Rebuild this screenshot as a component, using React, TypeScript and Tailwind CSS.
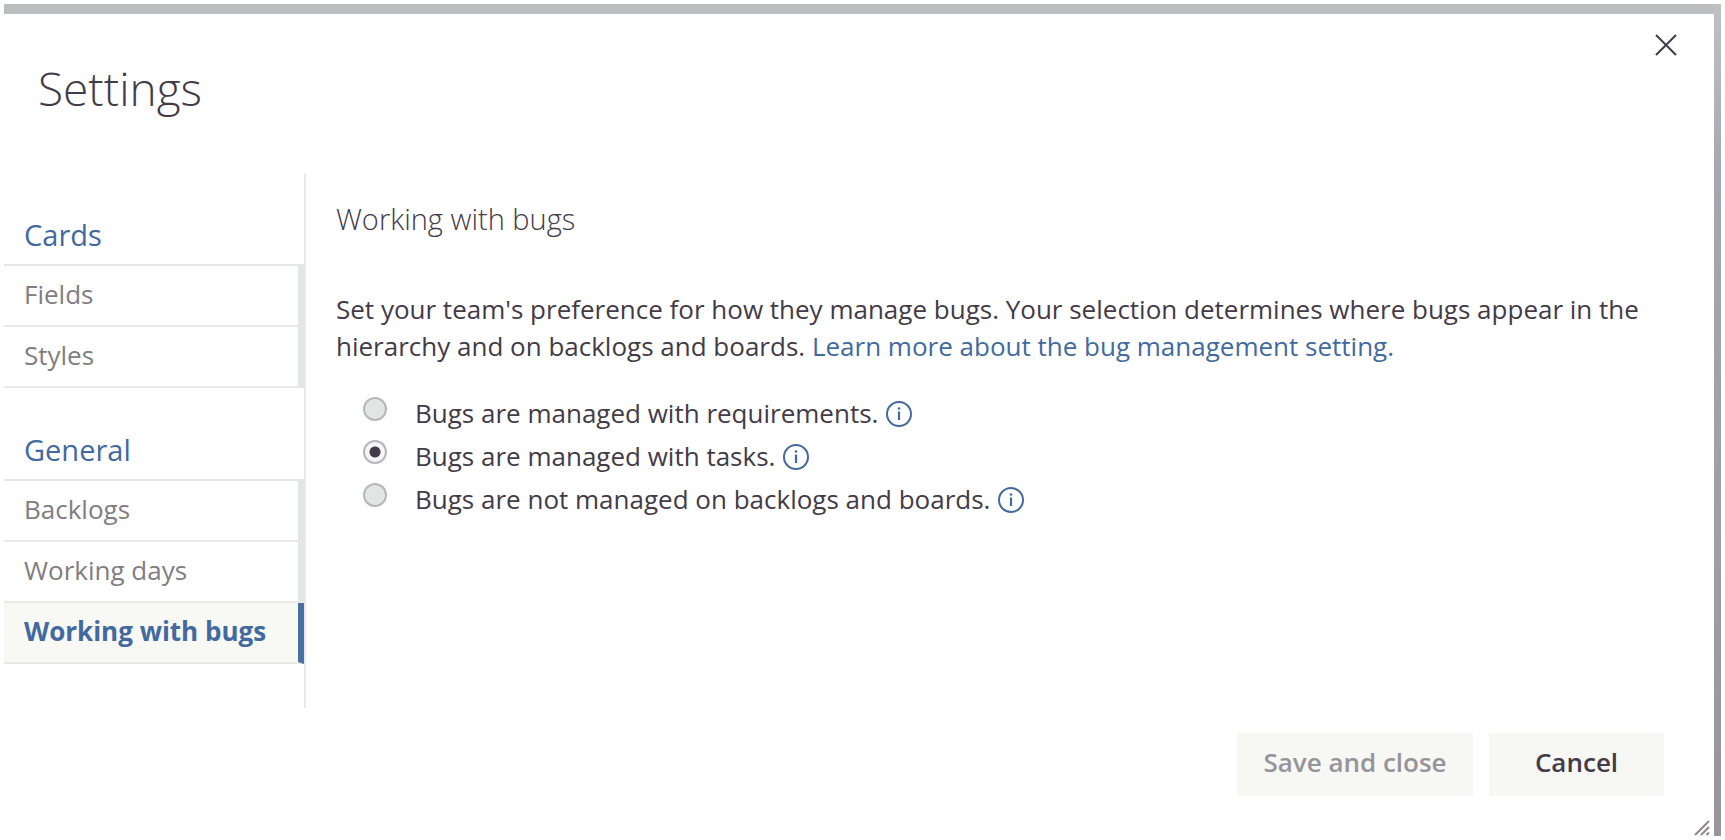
import { useState } from "react";

const sections = [
  { title: "Cards", items: ["Fields", "Styles"] },
  { title: "General", items: ["Backlogs", "Working days", "Working with bugs"] },
];

const options = [
  { id: "requirements", label: "Bugs are managed with requirements." },
  { id: "tasks", label: "Bugs are managed with tasks." },
  { id: "none", label: "Bugs are not managed on backlogs and boards." },
];

function InfoIcon() {
  return (
    <svg viewBox="0 0 26 26" className="h-[26px] w-[26px]" fill="none" aria-hidden="true">
      <circle cx="13" cy="13" r="12" stroke="#426a9f" strokeWidth="2" />
      <path d="M13 10.5V19" stroke="#426a9f" strokeWidth="2.2" />
      <circle cx="13" cy="7.5" r="1.3" fill="#426a9f" />
    </svg>
  );
}

function Sidebar({ active, onSelect }: { active: string; onSelect: (name: string) => void }) {
  return (
    <nav aria-label="Settings sections" className="w-[302px] shrink-0 border-r-2 border-[#e9e9e9] pb-11 pt-8">
      {sections.map((section) => (
        <section key={section.title} className="mb-8 last:mb-0">
          <h2 className="flex h-[59px] items-center pl-5 text-[29px] leading-9 text-[#426a9f]">{section.title}</h2>
          <ul className="border-t-2 border-[#e6e8e8]">
            {section.items.map((item) => {
              const selected = item === active;
              return (
                <li key={item}>
                  <button
                    type="button"
                    aria-current={selected ? "page" : undefined}
                    onClick={() => onSelect(item)}
                    className={
                      selected
                        ? "flex h-[61px] w-full items-center border-b-2 border-r-6 border-b-[#e6e8e8] border-r-[#4a6fa2] bg-[#f8f8f5] pb-1 pl-5 text-left text-[26px] font-bold leading-8 text-[#426a9f]"
                        : "flex h-[61px] w-full items-center border-b-2 border-r-6 border-b-[#e9e9e7] border-r-[#e4e6e6] pb-1 pl-5 text-left text-[26px] leading-8 text-[#817d82]"
                    }
                  >
                    {item}
                  </button>
                </li>
              );
            })}
          </ul>
        </section>
      ))}
    </nav>
  );
}

export default function App() {
  const [active, setActive] = useState("Working with bugs");
  const [choice, setChoice] = useState("tasks");

  return (
    <div className="flex min-h-screen bg-white p-1 font-['Open_Sans','Noto_Sans',sans-serif] text-[#433b48]">
      <div className="flex grow bg-linear-to-b from-[#bfc1c3] via-[#a5a8b0] via-20% to-[#98959a] pr-[7px]">
        <div className="flex grow flex-col border-t-10 border-[#bbbdbf] bg-white">
          <header className="flex items-start justify-between pl-[34px] pr-9 pt-[19px]">
            <h1 className="pt-5 text-[46px] font-light leading-[70px]">Settings</h1>
            <button type="button" aria-label="Close" className="flex h-6 w-6 items-center justify-center">
              <svg viewBox="0 0 24 24" className="h-6 w-6" fill="none" stroke="#433b48" strokeWidth="2" aria-hidden="true">
                <path d="M2 2L22 22M22 2L2 22" />
              </svg>
            </button>
          </header>

          <div className="mt-[50px] flex">
            <Sidebar active={active} onSelect={setActive} />
            <main className="grow pl-[30px] pr-14 pt-7">
              <h2 className="text-[29px] font-light leading-9">Working with bugs</h2>
              <p className="mt-[54px] text-[26px] leading-[37px]">
                Set your team's preference for how they manage bugs. Your selection determines where bugs appear in the hierarchy
                and on backlogs and boards.{" "}
                <a href="#bug-management" className="text-[#426a9f]">
                  Learn more about the bug management setting.
                </a>
              </p>
              <div role="radiogroup" aria-label="Bug management" className="mt-8 pl-[27px]">
                {options.map((option) => (
                  <div key={option.id} className="flex h-[43px] items-start gap-2">
                    <input
                      type="radio"
                      name="bugs"
                      id={option.id}
                      checked={choice === option.id}
                      onChange={() => setChoice(option.id)}
                      className="mr-5 h-6 w-6 shrink-0 appearance-none rounded-full border-2 border-[#b4b7bb] bg-[#e3e5e5] checked:bg-[radial-gradient(circle,#433b48_0_5px,#f6f6f6_6px)]"
                    />
                    <label htmlFor={option.id} className="text-[26px] leading-8">
                      {option.label}
                    </label>
                    <button type="button" aria-label={"About: " + option.label} className="mt-1">
                      <InfoIcon />
                    </button>
                  </div>
                ))}
              </div>
            </main>
          </div>

          <footer className="mt-auto flex items-end">
            <div className="mb-10 flex grow justify-end gap-4">
              <button type="button" disabled className="h-[63px] w-[236px] bg-[#f7f7f4] pb-1 text-[26px] font-semibold text-[#96949a]">
                Save and close
              </button>
              <button type="button" className="h-[63px] w-[175px] bg-[#f7f7f4] pb-1 text-[26px] font-semibold">
                Cancel
              </button>
            </div>
            <div className="flex w-[50px] justify-end pr-1">
              <svg viewBox="0 0 16 16" className="h-4 w-4" fill="none" stroke="#8f898d" strokeWidth="2" aria-hidden="true">
                <path d="M1 15L15 1M7 15L15 7M12.5 15L15 12.5" />
              </svg>
            </div>
          </footer>
        </div>
      </div>
    </div>
  );
}
